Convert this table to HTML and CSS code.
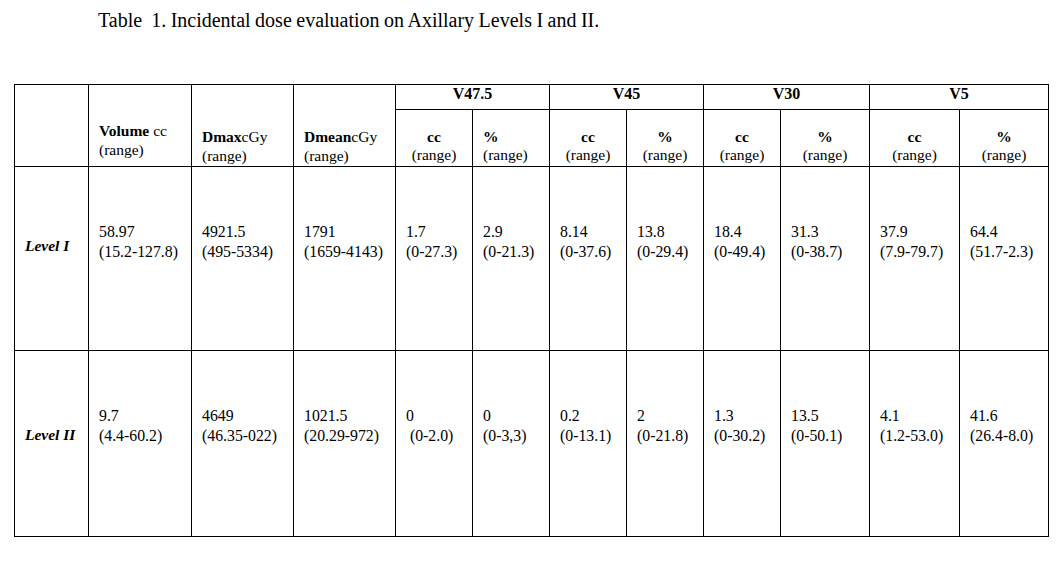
FILE: index.html
```html
<!DOCTYPE html>
<html>
<head>
<meta charset="utf-8">
<link rel="stylesheet" href="styles.css">
</head>
<body>
<div class="page">
  <p class="title">Table&nbsp; 1. Incidental dose evaluation on Axillary Levels I and II.</p>
  <table class="dose">
    <colgroup>
      <col class="c-lv"><col class="c-wide"><col class="c-mid"><col class="c-mid">
      <col class="c-v"><col class="c-v"><col class="c-v"><col class="c-v"><col class="c-v">
      <col class="c-w89"><col class="c-w90"><col class="c-w89">
    </colgroup>
    <tr class="r-group">
      <td rowspan="2"></td>
      <td rowspan="2" class="h-vol"><b>Volume</b> cc<br>(range)</td>
      <td rowspan="2" class="h-d"><b>Dmax</b>cGy<br>(range)</td>
      <td rowspan="2" class="h-d"><b>Dmean</b>cGy<br>(range)</td>
      <td colspan="2" class="h-grp">V47.5</td>
      <td colspan="2" class="h-grp">V45</td>
      <td colspan="2" class="h-grp">V30</td>
      <td colspan="2" class="h-grp">V5</td>
    </tr>
    <tr class="r-sub">
      <td class="h-sub"><b>cc</b><br>(range)</td>
      <td class="h-sub h-pct"><b>%</b><br>(range)</td>
      <td class="h-sub"><b>cc</b><br>(range)</td>
      <td class="h-sub"><b>%</b><br>(range)</td>
      <td class="h-sub"><b>cc</b><br>(range)</td>
      <td class="h-sub"><b>%</b><br>(range)</td>
      <td class="h-sub"><b>cc</b><br>(range)</td>
      <td class="h-sub"><b>%</b><br>(range)</td>
    </tr>
    <tr class="r-data r1">
      <td class="lv lv1">Level I</td>
      <td class="v">58.97<br>(15.2-127.8)</td>
      <td class="v">4921.5<br>(495-5334)</td>
      <td class="v">1791<br>(1659-4143)</td>
      <td class="v">1.7<br>(0-27.3)</td>
      <td class="v">2.9<br>(0-21.3)</td>
      <td class="v">8.14<br>(0-37.6)</td>
      <td class="v">13.8<br>(0-29.4)</td>
      <td class="v">18.4<br>(0-49.4)</td>
      <td class="v">31.3<br>(0-38.7)</td>
      <td class="v">37.9<br>(7.9-79.7)</td>
      <td class="v">64.4<br>(51.7-2.3)</td>
    </tr>
    <tr class="r-data r2">
      <td class="lv lv2">Level II</td>
      <td class="v">9.7<br>(4.4-60.2)</td>
      <td class="v">4649<br>(46.35-022)</td>
      <td class="v">1021.5<br>(20.29-972)</td>
      <td class="v">0<br>&nbsp;(0-2.0)</td>
      <td class="v">0<br>(0-3,3)</td>
      <td class="v">0.2<br>(0-13.1)</td>
      <td class="v">2<br>(0-21.8)</td>
      <td class="v">1.3<br>(0-30.2)</td>
      <td class="v">13.5<br>(0-50.1)</td>
      <td class="v">4.1<br>(1.2-53.0)</td>
      <td class="v">41.6<br>(26.4-8.0)</td>
    </tr>
  </table>
</div>
</body>
</html>
```

FILE: styles.css
```css
html, body {
  margin: 0;
  padding: 0;
  background: #fff;
}

.page {
  padding: 8px 0 0 14px;
  font-family: "Liberation Serif", "Times New Roman", serif;
  color: #000;
}

.title {
  margin: 0 0 52px 84px;
  font-size: 20px;
  line-height: 24px;
  word-spacing: -0.5px;
  white-space: nowrap;
}

.dose {
  border-collapse: collapse;
  table-layout: fixed;
  width: 1035px;
}

.c-lv { width: 74px; }
.c-wide { width: 103px; }
.c-mid { width: 102px; }
.c-v { width: 77px; }
.c-w89 { width: 89px; }
.c-w90 { width: 90px; }

.dose td {
  border: 1px solid #000;
  padding: 0;
}

.r-group { height: 25px; }
.r-sub { height: 57px; }
.r1 { height: 184px; }
.r2 { height: 186px; }

.h-grp {
  font-size: 16px;
  font-weight: bold;
  line-height: 18px;
  text-align: center;
  vertical-align: top;
}

.h-vol, .h-d {
  font-size: 15.5px;
  line-height: 19px;
  vertical-align: bottom;
  padding-left: 10px !important;
}

.h-vol { padding-bottom: 7px !important; }
.h-d { padding-bottom: 1px !important; }

.h-sub {
  font-size: 15.5px;
  line-height: 18px;
  text-align: center;
  vertical-align: bottom;
  padding-bottom: 2px !important;
}

.h-sub.h-pct {
  text-align: left;
  padding-left: 10px !important;
}

.v {
  font-size: 15.8px;
  line-height: 20px;
  vertical-align: top;
  padding: 55px 0 0 10px !important;
  white-space: nowrap;
}

.lv {
  font-size: 15.5px;
  line-height: 20px;
  font-weight: bold;
  font-style: italic;
  vertical-align: top;
  padding-left: 10px !important;
  white-space: nowrap;
}

.lv1 { padding-top: 69px !important; }
.lv2 { padding-top: 74px !important; }
```
